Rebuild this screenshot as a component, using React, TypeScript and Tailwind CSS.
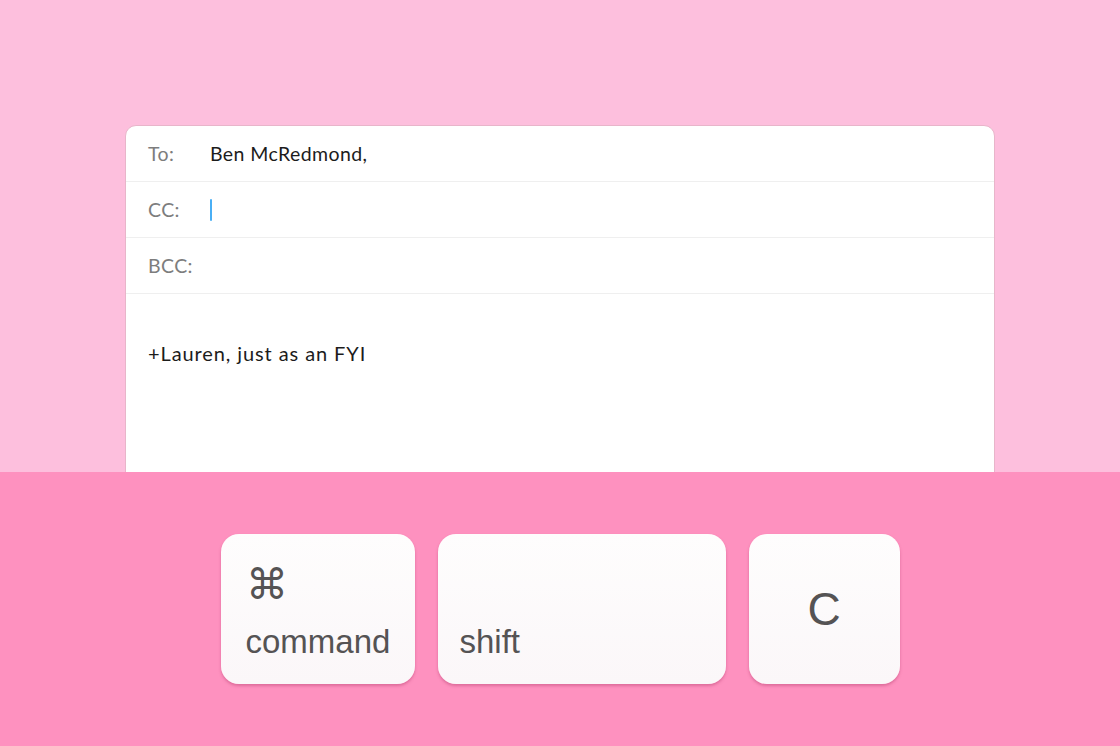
const fields = [
  { label: 'To:', value: 'Ben McRedmond,' },
  { label: 'CC:', value: null, cursor: true },
  { label: 'BCC:', value: null },
]

function Key({ width, children, className = '' }: { width: string; children: React.ReactNode; className?: string }) {
  return (
    <div
      className={`${width} h-[150px] rounded-[18px] bg-gradient-to-b from-[#fefdfd] to-[#fbf7f9] shadow-[0_2px_3px_rgba(160,40,90,0.35)] text-[#555354] ${className}`}
      style={{ fontFamily: '"Liberation Sans", Arial, sans-serif' }}
    >
      {children}
    </div>
  )
}

export default function App() {
  return (
    <div className="w-[1120px] h-[746px] flex flex-col overflow-hidden" style={{ fontFamily: 'Lato, "Noto Sans", sans-serif' }}>
      <div className="h-[472px] bg-[#fdbfdd] flex justify-center pt-[125px] overflow-hidden">
        <div className="w-[870px] h-[400px] bg-white rounded-[11px] border border-[#e8b5ca]">
          {fields.map((f) => (
            <div key={f.label} className="h-[56px] flex items-center px-[22px] border-b border-[#efefef] text-[19.5px] tracking-[0.4px]">
              <span className="w-[62px] text-[#7d7d7d]">{f.label}</span>
              {f.value && <span className="text-[#1c1c1c]">{f.value}</span>}
              {f.cursor && <span className="w-[2px] h-[22px] bg-[#4aaff5] rounded-full" />}
            </div>
          ))}
          <div className="px-[22px] pt-[44px] text-[20px] tracking-[0.9px] text-[#1c1c1c]">+Lauren, just as an FYI</div>
        </div>
      </div>
      <div className="flex-1 bg-[#fe91bf] flex justify-center pt-[62px] gap-[23px]">
        <Key width="w-[194px]" className="flex flex-col justify-between pl-[25px] pr-[10px] pt-[29px] pb-[24px]">
          <span className="text-[42px] leading-[44px]">⌘</span>
          <span className="text-[33px] leading-[36px]">command</span>
        </Key>
        <Key width="w-[288px]" className="flex flex-col justify-end px-[22px] pb-[24px]">
          <span className="text-[33px] leading-[36px]">shift</span>
        </Key>
        <Key width="w-[151px]" className="flex items-center justify-center">
          <span className="text-[46px] leading-none">C</span>
        </Key>
      </div>
    </div>
  )
}
